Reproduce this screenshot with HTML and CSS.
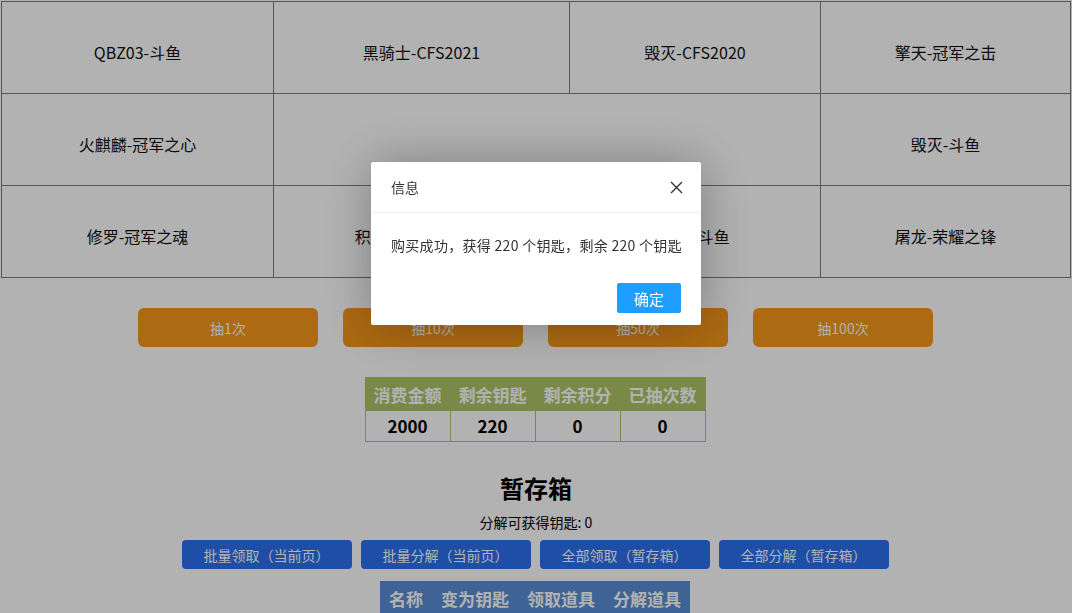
FILE: index.html
```html
<!DOCTYPE html>
<html lang="zh-CN">
<head>
<meta charset="utf-8">
<title>抽奖</title>
<link rel="stylesheet" href="styles.css">
</head>
<body>
<div class="prize-grid">
  <div class="cell">QBZ03-斗鱼</div>
  <div class="cell">黑骑士-CFS2021</div>
  <div class="cell">毁灭-CFS2020</div>
  <div class="cell">擎天-冠军之击</div>
  <div class="cell">火麒麟-冠军之心</div>
  <div class="cell center-cell"></div>
  <div class="cell">毁灭-斗鱼</div>
  <div class="cell">修罗-冠军之魂</div>
  <div class="cell">积分宝箱-CFS2021</div>
  <div class="cell">雷神-斗鱼</div>
  <div class="cell">屠龙-荣耀之锋</div>
</div>

<div class="draw-row">
  <button class="draw-btn">抽1次</button>
  <button class="draw-btn">抽10次</button>
  <button class="draw-btn">抽50次</button>
  <button class="draw-btn">抽100次</button>
</div>

<table class="stats">
  <thead>
    <tr><th>消费金额</th><th>剩余钥匙</th><th>剩余积分</th><th>已抽次数</th></tr>
  </thead>
  <tbody>
    <tr><td>2000</td><td>220</td><td>0</td><td>0</td></tr>
  </tbody>
</table>

<h2 class="box-title">暂存箱</h2>
<p class="box-sub">分解可获得钥匙: 0</p>
<div class="box-actions">
  <button class="blue-btn">批量领取（当前页）</button>
  <button class="blue-btn">批量分解（当前页）</button>
  <button class="blue-btn">全部领取（暂存箱）</button>
  <button class="blue-btn">全部分解（暂存箱）</button>
</div>
<table class="box-table">
  <thead>
    <tr><th>名称</th><th>变为钥匙</th><th>领取道具</th><th>分解道具</th></tr>
  </thead>
</table>

<div class="shade"></div>
<div class="dialog">
  <div class="dialog-head">
    <span>信息</span>
    <svg class="close" width="13" height="13" viewBox="0 0 13 13"><path d="M1 1L12 12M12 1L1 12" stroke="#333" stroke-width="1.4" fill="none"/></svg>
  </div>
  <div class="dialog-body">购买成功，获得 220 个钥匙，剩余 220 个钥匙</div>
  <div class="dialog-foot"><button class="ok-btn">确定</button></div>
</div>
</body>
</html>
```

FILE: styles.css
```css
* { box-sizing: border-box; }
html, body { margin: 0; padding: 0; background: #fff; }
body {
  font-family: "Microsoft YaHei", "Noto Sans CJK SC", "Noto Sans", sans-serif;
  color: #111;
  width: 1072px;
  height: 613px;
  overflow: hidden;
}

.prize-grid {
  margin: 1px 1px 0 1px;
  display: grid;
  grid-template-columns: 272px 296px 251px 250px;
  grid-template-rows: 92px 92px 92px;
  border-top: 1px solid #7d7d7d;
  border-left: 1px solid #7d7d7d;
}
.cell {
  border-right: 1px solid #7d7d7d;
  border-bottom: 1px solid #7d7d7d;
  display: flex;
  align-items: center;
  justify-content: center;
  padding-top: 8px;
  font-size: 16px;
  color: #111;
}
.center-cell { grid-column: span 2; }

.draw-row {
  display: flex;
  justify-content: center;
  gap: 25px;
  margin-top: 30px;
  padding-right: 1px;
}
.draw-btn {
  width: 180px;
  height: 39px;
  border: 0;
  border-radius: 6px;
  background: #f7981a;
  color: #fff;
  font-family: inherit;
  font-size: 14px;
}

.stats {
  margin: 30px auto 0;
  border-collapse: collapse;
  position: relative;
  left: -1px;
}
.stats th, .stats td {
  width: 85px;
  border: 1px solid #aec567;
  text-align: center;
  font-size: 17px;
  font-weight: bold;
  padding: 0;
}
.stats th {
  background: #aec567;
  color: #fff;
  height: 33px;
}
.stats td {
  color: #000;
  height: 31px;
  padding-bottom: 2px;
}

.box-title {
  margin: 30px 0 0;
  text-align: center;
  font-size: 24px;
  line-height: 32px;
  font-weight: bold;
  color: #000;
}
.box-sub {
  margin: 8px 0 0;
  text-align: center;
  font-size: 14px;
  line-height: 20px;
  color: #000;
}
.box-actions {
  display: flex;
  justify-content: center;
  gap: 9px;
  margin-top: 8px;
  padding-right: 2px;
}
.blue-btn {
  width: 170px;
  height: 29px;
  border: 0;
  border-radius: 4px;
  background: #2b70ed;
  color: #fff;
  font-family: inherit;
  font-size: 14px;
}
.box-table {
  margin: 12px auto 0;
  border-collapse: collapse;
  background: #598fd4;
  position: relative;
  left: -1px;
}
.box-table th {
  color: #fff;
  font-size: 17px;
  font-weight: bold;
  height: 34px;
  padding: 0 9px;
}

.shade {
  position: fixed;
  inset: 0;
  background: rgba(0, 0, 0, 0.3);
}
.dialog {
  position: fixed;
  left: 371px;
  top: 162px;
  width: 330px;
  background: #fff;
  border-radius: 2px;
  box-shadow: 1px 1px 50px rgba(0, 0, 0, 0.3);
  color: #333;
}
.dialog-head {
  height: 51px;
  padding: 0 18px 0 20px;
  display: flex;
  align-items: center;
  justify-content: space-between;
  border-bottom: 1px solid #eee;
  font-size: 14px;
}
.close { display: block; }
.dialog-body {
  padding: 22px 20px 0;
  font-size: 14px;
  line-height: 20px;
  letter-spacing: 0.3px;
  white-space: nowrap;
}
.dialog-foot {
  display: flex;
  justify-content: flex-end;
  padding: 28px 20px 12px;
}
.ok-btn {
  width: 64px;
  height: 30px;
  border: 0;
  border-radius: 2px;
  background: #1e9fff;
  color: #fff;
  font-family: inherit;
  font-size: 15px;
}
```
